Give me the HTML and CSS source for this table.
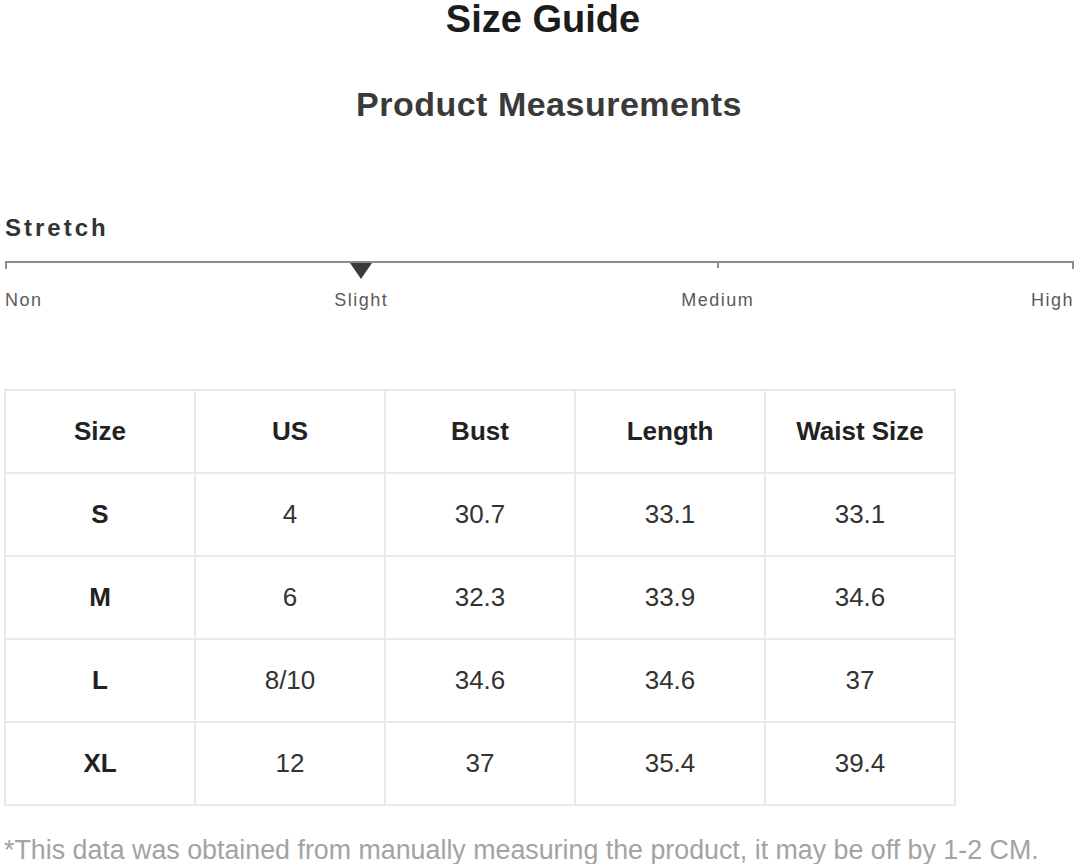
FILE: index.html
```html
<!DOCTYPE html>
<html lang="en">
<head>
<meta charset="utf-8">
<title>Size Guide</title>
<link rel="stylesheet" href="styles.css">
</head>
<body>
<main class="page">
  <h1 class="title">Size Guide</h1>
  <h2 class="subtitle">Product Measurements</h2>

  <section class="stretch">
    <h3 class="stretch-title">Stretch</h3>
    <div class="scale">
      <div class="scale-line"></div>
      <div class="scale-marks">
        <span class="tick tick-left"></span>
        <span class="pointer"></span>
        <span class="tick tick-mid"></span>
        <span class="tick tick-right"></span>
      </div>
      <div class="scale-labels">
        <span class="lbl lbl-left">Non</span>
        <span class="lbl lbl-mid">Slight</span>
        <span class="lbl lbl-mid">Medium</span>
        <span class="lbl lbl-right">High</span>
      </div>
    </div>
  </section>

  <table class="sizes">
    <thead>
      <tr><th>Size</th><th>US</th><th>Bust</th><th>Length</th><th>Waist Size</th></tr>
    </thead>
    <tbody>
      <tr><th>S</th><td>4</td><td>30.7</td><td>33.1</td><td>33.1</td></tr>
      <tr><th>M</th><td>6</td><td>32.3</td><td>33.9</td><td>34.6</td></tr>
      <tr><th>L</th><td>8/10</td><td>34.6</td><td>34.6</td><td>37</td></tr>
      <tr><th>XL</th><td>12</td><td>37</td><td>35.4</td><td>39.4</td></tr>
    </tbody>
  </table>

  <p class="note">*This data was obtained from manually measuring the product, it may be off by 1-2 CM.</p>
</main>
</body>
</html>
```

FILE: styles.css
```css
html, body {
  margin: 0;
  padding: 0;
  background: #ffffff;
}

.page {
  width: 1078px;
  font-family: "Liberation Sans", Arial, sans-serif;
  color: #333333;
}

.title {
  margin: 0;
  text-align: center;
  font-size: 38px;
  line-height: 38px;
  font-weight: 700;
  color: #1c1c1c;
  padding-left: 8px;
}

.subtitle {
  margin: 49px 0 0 0;
  text-align: center;
  font-size: 34px;
  line-height: 34px;
  font-weight: 700;
  color: #3a3a3a;
  letter-spacing: 0.5px;
  padding-left: 20px;
}

.stretch {
  margin-top: 95px;
  padding: 0 4px 0 5px;
}

.stretch-title {
  margin: 0;
  font-size: 24px;
  line-height: 24px;
  font-weight: 700;
  color: #333333;
  letter-spacing: 3px;
}

.scale {
  margin-top: 21px;
}

.scale-line {
  height: 2px;
  background: #8c8c8c;
}

.scale-marks,
.scale-labels {
  display: grid;
  grid-template-columns: 1fr 2fr 2fr 1fr;
}

.scale-marks {
  height: 16px;
  align-items: start;
}

.tick {
  width: 2px;
  height: 6px;
  background: #8c8c8c;
}

.tick-left { justify-self: start; }
.tick-mid { justify-self: center; height: 5px; }
.tick-right { justify-self: end; }

.pointer {
  justify-self: center;
  width: 0;
  height: 0;
  border-left: 11px solid transparent;
  border-right: 11px solid transparent;
  border-top: 16px solid #3a3a3a;
}

.scale-labels {
  margin-top: 12px;
  font-size: 18px;
  line-height: 18px;
  color: #5a5a5a;
  letter-spacing: 1.5px;
}

.lbl-left { justify-self: start; }
.lbl-mid { justify-self: center; }
.lbl-right { justify-self: end; }

.sizes {
  margin: 80px 0 0 4px;
  border-collapse: collapse;
  table-layout: fixed;
  width: 952px;
  font-size: 26px;
}

.sizes th,
.sizes td {
  width: 188px;
  height: 81px;
  padding: 0;
  border: 2px solid #e9e9e9;
  text-align: center;
  vertical-align: middle;
}

.sizes th {
  font-weight: 700;
  color: #222222;
}

.sizes td {
  font-weight: 400;
  color: #333333;
}

.note {
  margin: 31px 0 0 4px;
  font-size: 26.8px;
  line-height: 27px;
  color: #a3a3a3;
  white-space: nowrap;
}
```
